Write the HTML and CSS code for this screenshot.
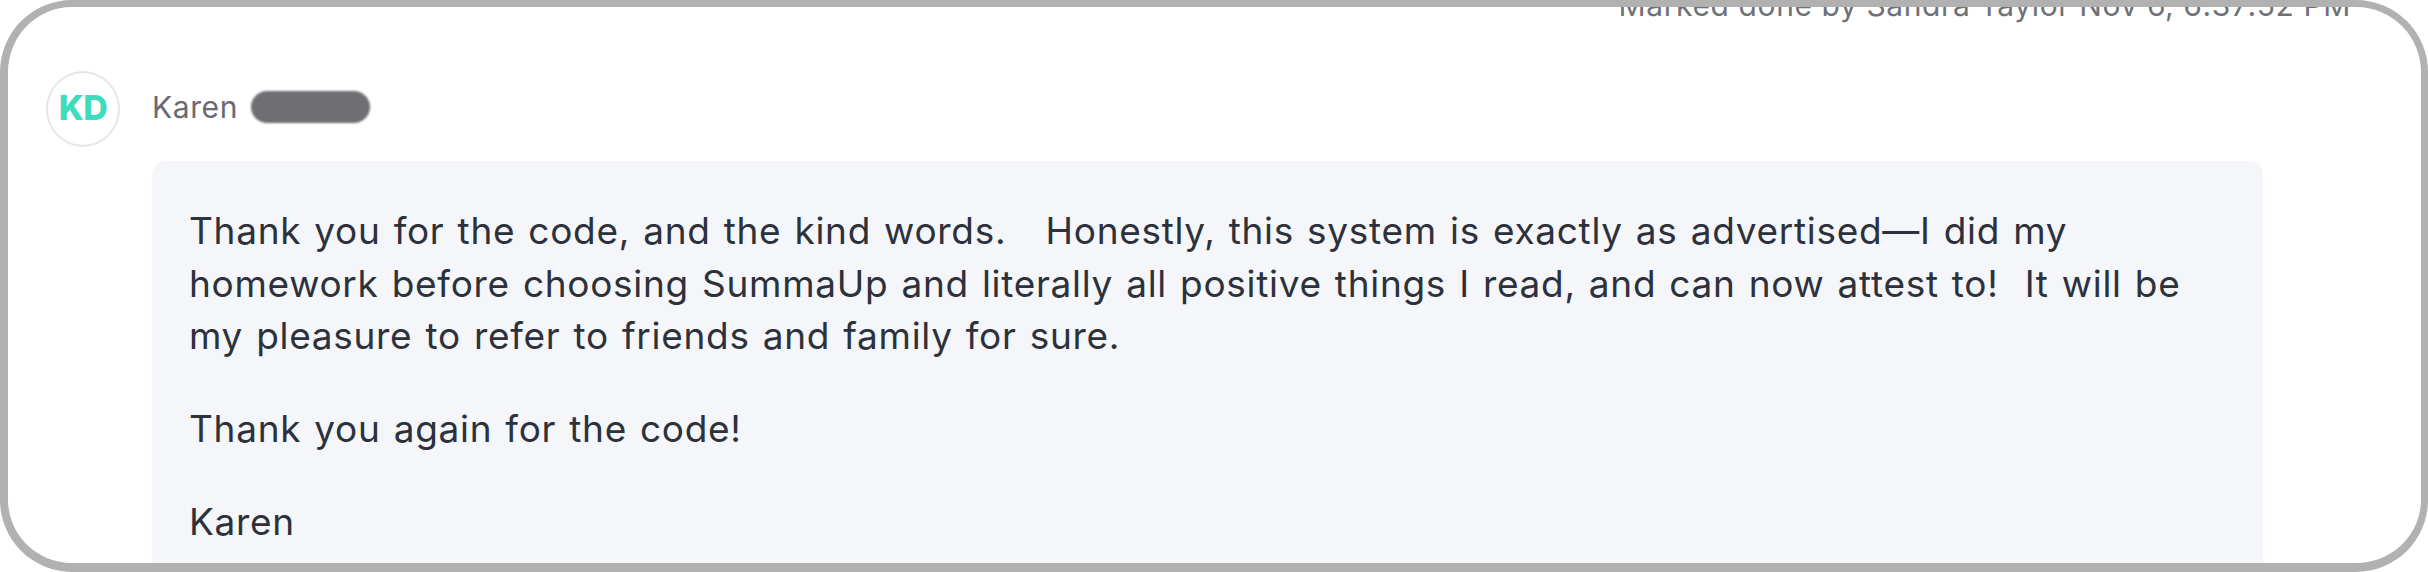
FILE: index.html
```html
<!DOCTYPE html>
<html lang="en">
<head>
<meta charset="utf-8">
<title>Conversation</title>
<link rel="stylesheet" href="styles.css">
</head>
<body>
<div class="frame">
  <div class="status-row">
    <span class="status">Marked done by Sandra Taylor Nov 6, 6:37:52 PM</span>
  </div>
  <div class="msg">
    <div class="avatar">KD</div>
    <div class="msg-body">
      <div class="msg-head">
        <span class="author">Karen</span>
        <span class="redacted"></span>
      </div>
      <div class="bubble">
        <p>Thank you for the code, and the kind words.&nbsp;&nbsp; Honestly, this system is exactly as advertised—I did my<br>homework before choosing SummaUp and literally all positive things I read, and can now attest to!&nbsp; It will be<br>my pleasure to refer to friends and family for sure.</p>
        <p>Thank you again for the code!</p>
        <p>Karen</p>
      </div>
    </div>
  </div>
</div>
</body>
</html>
```

FILE: styles.css
```css
html, body {
  margin: 0;
  padding: 0;
  background: #ffffff;
}

body {
  font-family: "Inter", "Noto Sans", "Liberation Sans", sans-serif;
}

.frame {
  box-sizing: border-box;
  width: 2428px;
  height: 572px;
  border-style: solid;
  border-color: #b1b1b1;
  border-width: 7px 7px 9px 8px;
  border-radius: 72px;
  overflow: hidden;
  background: #ffffff;
}

.status-row {
  display: flex;
  justify-content: flex-end;
  margin-top: -20px;
  padding-right: 70px;
}

.status {
  font-size: 30px;
  line-height: 36px;
  letter-spacing: 0.6px;
  color: #6f7178;
  white-space: nowrap;
}

.msg {
  display: flex;
  align-items: flex-start;
  gap: 32px;
  margin-top: 48px;
  padding-left: 38px;
}

.avatar {
  flex: none;
  box-sizing: border-box;
  width: 74px;
  height: 76px;
  padding-bottom: 4px;
  border: 2px solid #e4e6eb;
  border-radius: 50%;
  display: flex;
  align-items: center;
  justify-content: center;
  font-size: 34px;
  font-weight: 800;
  letter-spacing: -0.5px;
  color: #3ddcbc;
}

.msg-body {
  flex: none;
  width: 2111px;
}

.msg-head {
  display: flex;
  align-items: center;
  gap: 13px;
  margin-top: 18px;
  height: 36px;
}

.author {
  font-size: 30px;
  line-height: 36px;
  letter-spacing: 0.6px;
  color: #666a72;
}

.redacted {
  width: 119px;
  height: 32px;
  border-radius: 16px;
  background: #6e6e73;
  filter: blur(1px);
}

.bubble {
  margin-top: 36px;
  background: #f5f6fa;
  border-radius: 14px;
  padding: 44px 37px 60px 37px;
  color: #2c313b;
  font-size: 37px;
  line-height: 52.5px;
  letter-spacing: 0.7px;
  word-spacing: 2px;
  white-space: nowrap;
}

.bubble p {
  margin: 0 0 40.5px 0;
}
```
